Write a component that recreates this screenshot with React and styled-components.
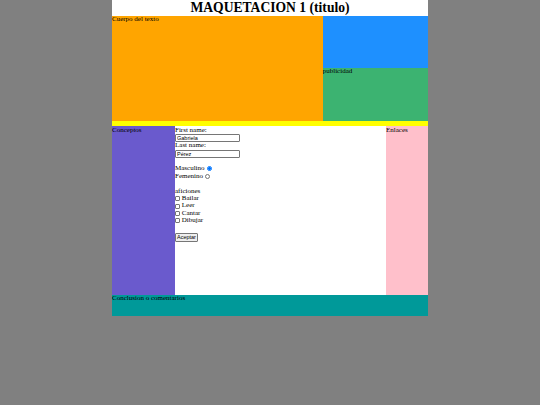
import React from "react";
import styled, { createGlobalStyle } from "styled-components";

const Global = createGlobalStyle`
  html, body { margin: 0; padding: 0; background: #808080; }
  body { font-family: "Liberation Serif", "Times New Roman", serif; }
`;

const Page = styled.div`
  width: 316px;
  margin: 0 auto;
  font-size: 7px;
  line-height: 7.5px;
  color: #000;
`;

const Title = styled.h1`
  margin: 0;
  height: 16px;
  background: #fff;
  text-align: center;
  font-size: 13.6px;
  line-height: 16px;
  font-weight: bold;
`;

const TopRow = styled.div`
  display: flex;
  height: 105px;
`;

const Block = styled.div`
  background: ${(p) => p.$bg};
  flex: ${(p) => p.$flex || "none"};
  width: ${(p) => p.$w || "auto"};
  height: ${(p) => p.$h || "auto"};
`;

const Side = styled.div`
  flex: 1;
  display: flex;
  flex-direction: column;
`;

const Strip = styled.div`
  height: 5px;
  background: #ffff00;
`;

const MidRow = styled.div`
  display: flex;
  height: 169px;
`;

const Form = styled.form`
  width: 211px;
  background: #fff;
  display: flex;
  flex-direction: column;
  align-items: flex-start;
`;

const Line = styled.div`
  height: 7.5px;
  display: flex;
  align-items: center;
  white-space: nowrap;
`;

const Gap = styled.div`
  height: ${(p) => p.$h || 7.5}px;
`;

const TextInput = styled.input`
  box-sizing: border-box;
  width: 65px;
  height: 8px;
  margin: 0;
  padding: 0 1px;
  border: 1px solid #767676;
  border-radius: 1px;
  font-family: "Liberation Sans", Arial, sans-serif;
  font-size: 5.5px;
  line-height: 6px;
  color: #000;
  background: #fff;
  outline: none;
`;

const Radio = styled.input`
  appearance: none;
  box-sizing: border-box;
  width: 5px;
  height: 5px;
  margin: 0 0 0 2px;
  border-radius: 50%;
  border: 0.6px solid #767676;
  background: #fff;
  &:checked {
    border: 0.6px solid #0075ff;
    background: radial-gradient(circle, #0075ff 0 1.3px, #fff 1.5px 1.8px, #0075ff 2px);
  }
`;

const Check = styled.input`
  appearance: none;
  box-sizing: border-box;
  width: 5px;
  height: 5px;
  margin: 0 1.5px 0 0.3px;
  border: 0.6px solid #767676;
  border-radius: 1px;
  background: #fff;
`;

const CheckLine = styled(Line)`
  height: 7.4px;
`;

const Submit = styled.button`
  box-sizing: border-box;
  height: 9px;
  padding: 0 1px;
  margin: 0;
  font-family: "Liberation Sans", Arial, sans-serif;
  font-size: 5.5px;
  line-height: 7px;
  color: #000;
  background: #efefef;
  border: 1px solid #767676;
  border-radius: 1px;
`;

const Footer = styled.div`
  height: 21px;
  background: #009999;
`;

export default function App() {
  return (
    <>
      <Global />
      <Page>
        <Title>MAQUETACION 1 (titulo)</Title>
        <TopRow>
          <Block $bg="#ffa500" $w="210.7px">Cuerpo del texto</Block>
          <Side>
            <Block $bg="#1e90ff" $h="52px" />
            <Block $bg="#3cb371" $flex="1">publicidad</Block>
          </Side>
        </TopRow>
        <Strip />
        <MidRow>
          <Block $bg="#6a5acd" $w="63px">
            <Gap $h={0.5} />
            Conceptos
          </Block>
          <Form onSubmit={(e) => e.preventDefault()}>
            <Gap $h={0.5} />
            <Line>First name:</Line>
            <TextInput defaultValue="Gabriela" />
            <Line>Last name:</Line>
            <TextInput defaultValue="Pérez" />
            <Gap />
            <Line>
              Masculino
              <Radio type="radio" name="sexo" defaultChecked />
            </Line>
            <Line>
              Femenino
              <Radio type="radio" name="sexo" />
            </Line>
            <Gap />
            <Line>aficiones</Line>
            <CheckLine>
              <Check type="checkbox" />
              Bailar
            </CheckLine>
            <CheckLine>
              <Check type="checkbox" />
              Leer
            </CheckLine>
            <CheckLine>
              <Check type="checkbox" />
              Cantar
            </CheckLine>
            <CheckLine>
              <Check type="checkbox" />
              Dibujar
            </CheckLine>
            <Gap $h={8} />
            <Submit type="submit">Aceptar</Submit>
          </Form>
          <Block $bg="#ffc0cb" $flex="1">
            <Gap $h={0.5} />
            Enlaces
          </Block>
        </MidRow>
        <Footer>Conclusion o comentarios</Footer>
      </Page>
    </>
  );
}
